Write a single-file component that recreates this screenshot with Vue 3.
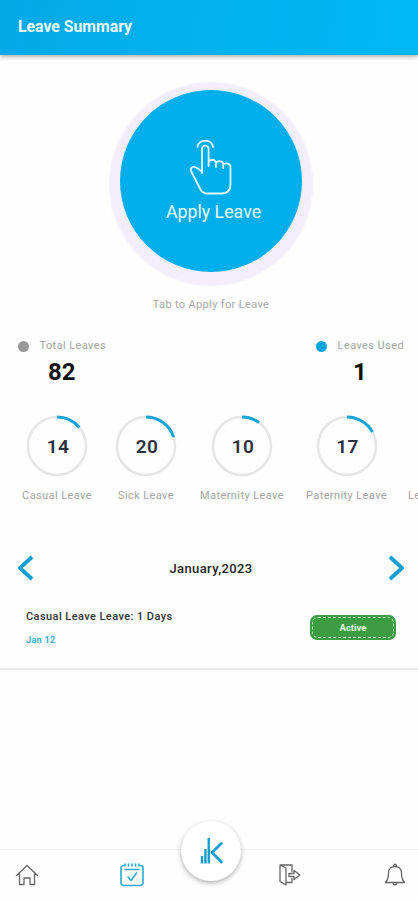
<template>
  <div class="screen">
    <header class="app-header">
      <h1 class="app-title">Leave Summary</h1>
    </header>

    <main class="content">
      <section class="apply">
        <button class="apply-button">
          <svg class="hand-icon" viewBox="0 0 42 56">
            <path d="M12 33V9a3.300 3.300 0 0 1 6.600 0V26M18.600 22.500c1-3.500 7-3.500 7.300.500V27M25.900 23.500c1-3.500 7-3 7.300.800V28M33.200 25c2-2.800 7.300-1.500 7.300 2V44c0 6-3 9.500-8.500 9.500H17c-3 0-4.800-1.200-6.500-4L1.500 32C-.500 28 2.500 26 6 27.500c3 1.200 4.500 3 6 4.500" />
            <path d="M7.500 7C8.500-1.300 22-1.300 23 7" />
          </svg>
          <span class="apply-label">Apply Leave</span>
        </button>
        <p class="apply-hint">Tab to Apply for Leave</p>
      </section>

      <section class="totals">
        <div class="total">
          <p class="total-label"><span class="dot"></span>Total Leaves</p>
          <p class="total-value">82</p>
        </div>
        <div class="total">
          <p class="total-label"><span class="dot dot-used"></span>Leaves Used</p>
          <p class="total-value">1</p>
        </div>
      </section>

      <section class="leave-types">
        <div v-for="leave in leaveTypes" :key="leave.name" class="leave-type" :style="{ width: leave.width + 'px' }">
          <div class="ring">
            <svg class="ring-svg" viewBox="0 0 62 62">
              <circle class="ring-track" cx="31" cy="31" r="29" />
              <circle class="ring-value" cx="31" cy="31" r="29" pathLength="100" :stroke-dasharray="leave.days + ' 100'" />
            </svg>
            <span class="ring-number">{{ leave.days }}</span>
          </div>
          <span class="leave-name">{{ leave.name }}</span>
        </div>
        <span class="leave-name leave-next">Leave</span>
      </section>

      <section class="month">
        <svg class="chevron" viewBox="0 0 16 26"><path d="M15 2 3 13l12 11" /></svg>
        <h2 class="month-title">January,2023</h2>
        <svg class="chevron" viewBox="0 0 16 26"><path d="m1 2 12 11L1 24" /></svg>
      </section>

      <section class="entry">
        <div>
          <p class="entry-title">Casual Leave Leave: 1 Days</p>
          <p class="entry-date">Jan 12</p>
        </div>
        <span class="status"><span class="status-text">Active</span></span>
      </section>
    </main>

    <nav class="tab-bar">
      <svg class="tab-icon" viewBox="0 0 24 24">
        <path d="M1.500 12.500 12 2.500l10.500 10M4.500 10.500V21.500H9v-6.500h6v6.500h4.500V10.500" />
      </svg>
      <svg class="tab-icon tab-active" viewBox="0 0 24 24">
        <path d="M3.500 2.500a2.500 2.500 0 0 0-2.500 2.500v14.500a3 3 0 0 0 3 3h16a3 3 0 0 0 3-3V5a2.500 2.500 0 0 0-2.500-2.500M5 6.500h14M5 1v2M8.500 1v2M12 1v2M15.500 1v2M19 1v2M8 14l3 3.500 5.500-7.500" />
      </svg>
      <span class="tab-gap"></span>
      <svg class="tab-icon" viewBox="0 0 24 24">
        <path d="M2 2 8 5v17l-6-3.500ZM2 2h12v6.500M8 19.500h6v-4M11 10.500h5V7.500l6 4.500-6 4.500v-3h-5Z" />
      </svg>
      <svg class="tab-icon" viewBox="0 0 24 24">
        <path d="M2.500 19.500h19c-2.500-2.500-3-4.500-3-9.500 0-4-2.500-6.500-6.500-6.500S5.500 6 5.500 10c0 5-.5 7-3 9.500ZM10.500 3.500c0-3 3-3 3 0M10 20c.5 2.500 3.500 2.500 4 0" />
      </svg>
      <button class="fab">
        <svg class="logo" viewBox="0 0 24 28">
          <path class="logo-bars" d="M3 19v7.500M6.400 12v14.500M9.800 1v25.500" />
          <path class="logo-k" d="m22.300 6.500-9.300 9 9.300 9.500" />
        </svg>
      </button>
    </nav>
  </div>
</template>

<script setup>
const leaveTypes = [
  { name: 'Casual Leave', days: 14, width: 70 },
  { name: 'Sick Leave', days: 20, width: 63 },
  { name: 'Maternity Leave', days: 10, width: 84 },
  { name: 'Paternity Leave', days: 17, width: 80 }
]
</script>

<style>
body {
  background: #fefefe;
}
</style>

<style scoped>
.screen {
  position: relative;
  display: flex;
  flex-direction: column;
  width: 418px;
  height: 900px;
  overflow: hidden;
  background: #fefefe;
  font-family: Roboto, 'Liberation Sans', sans-serif;
}

h1, h2, p {
  margin: 0;
}

button {
  border: 0;
  padding: 0;
  font-family: inherit;
}

svg {
  display: block;
  fill: none;
  stroke-linecap: round;
  stroke-linejoin: round;
}

.app-header {
  display: flex;
  align-items: center;
  flex: none;
  height: 55px;
  padding: 0 18px;
  box-sizing: border-box;
  background: linear-gradient(100deg, #04a9e8, #00b9f4);
  box-shadow: 0 2px 4px rgba(0, 0, 0, 0.3);
}

.app-title {
  color: #effbff;
  font-size: 15.800px;
  line-height: 20px;
  font-weight: 700;
  padding-bottom: 1px;
}

.content {
  flex: 1;
}

.apply {
  display: flex;
  flex-direction: column;
  align-items: center;
  padding: 35px 0 0 4px;
}

.apply-button {
  display: flex;
  flex-direction: column;
  align-items: center;
  width: 182px;
  height: 182px;
  border-radius: 50%;
  background: #02aeeb;
  box-shadow: 0 3px 2px 11px #f2effb;
}

.hand-icon {
  width: 42px;
  height: 56px;
  margin-top: 50px;
  stroke: #e2f8ff;
  stroke-width: 1.8;
}

.apply-label {
  margin-top: 4px;
  padding-left: 5px;
  color: #e6f9ff;
  font-size: 17.800px;
  line-height: 24px;
}

.apply-hint {
  margin-top: 25px;
  color: #aaa;
  font-size: 11px;
  line-height: 16px;
  letter-spacing: 0.35px;
}

.totals {
  display: flex;
  justify-content: space-between;
  padding: 25px 14px 0 17.500px;
}

.total-label {
  display: flex;
  align-items: center;
  color: #a5a5a5;
  font-size: 11px;
  line-height: 16px;
  letter-spacing: 0.4px;
}

.dot {
  width: 11px;
  height: 11px;
  margin-right: 11px;
  border-radius: 50%;
  background: #999;
}

.dot-used {
  background: #09a5df;
}

.total-value {
  margin-top: 4px;
  color: #111;
  font-size: 24px;
  line-height: 28px;
  font-weight: 700;
  text-align: center;
}

.leave-types {
  display: flex;
  gap: 22.500px;
  padding: 29px 0 0 22px;
  overflow: hidden;
}

.leave-type {
  display: flex;
  flex-direction: column;
  align-items: center;
  flex: none;
}

.ring {
  display: grid;
  place-items: center;
  width: 62px;
  height: 62px;
}

.ring-svg {
  grid-area: 1 / 1;
  width: 62px;
  height: 62px;
  transform: rotate(-90deg);
}

.ring-track {
  stroke: #e6e6e8;
  stroke-width: 2.500;
}

.ring-value {
  stroke: #12a3d8;
  stroke-width: 3;
  stroke-linecap: butt;
}

.ring-number {
  grid-area: 1 / 1;
  padding-left: 2px;
  color: #2b3040;
  font-size: 19px;
  font-weight: 600;
  letter-spacing: 0.3px;
}

.leave-name {
  margin-top: 11px;
  color: #a5a5a5;
  font-size: 11px;
  line-height: 16px;
  letter-spacing: 0.4px;
  white-space: nowrap;
}

/* next item of the carousel, peeking in from the right */
.leave-next {
  align-self: flex-end;
  margin-left: -1px;
}

.month {
  display: flex;
  align-items: center;
  justify-content: space-between;
  padding: 51px 13px 0 17px;
}

.chevron {
  width: 16px;
  height: 26px;
  stroke: #129fd5;
  stroke-width: 3.800;
  stroke-linecap: butt;
}

.month-title {
  color: #222;
  font-size: 13px;
  font-weight: 500;
  letter-spacing: 0.4px;
}

.entry {
  display: flex;
  justify-content: space-between;
  height: 89px;
  padding: 27px 22px 0 26px;
  box-sizing: border-box;
  border-bottom: 2px solid #e9e9e9;
}

.entry-title {
  color: #333;
  font-size: 11px;
  line-height: 18px;
  font-weight: 500;
  letter-spacing: 0.42px;
}

.entry-date {
  margin-top: 7px;
  color: #25a5cd;
  font-size: 9.300px;
  line-height: 14px;
  font-weight: 500;
  letter-spacing: 0.2px;
}

.status {
  width: 86px;
  height: 25px;
  margin-top: 7px;
  padding: 2px;
  box-sizing: border-box;
  border-radius: 7px;
  background: #3b9c41;
}

.status-text {
  display: flex;
  align-items: center;
  justify-content: center;
  height: 21px;
  box-sizing: border-box;
  border: 1px dashed #b9dfb9;
  border-radius: 6px;
  color: #f0fff0;
  font-size: 9.500px;
  font-weight: 700;
}

.tab-bar {
  position: relative;
  display: flex;
  align-items: center;
  flex: none;
  height: 51px;
  padding: 0 10px 0 15px;
  box-sizing: border-box;
  border-top: 1px solid #f5f5f5;
}

.tab-icon {
  flex: none;
  width: 24px;
  height: 24px;
  margin-right: 81px;
  stroke: #666;
  stroke-width: 1.3;
}

.tab-active {
  margin-right: 0;
  stroke: #2ba9d2;
  stroke-width: 1.6;
}

.tab-gap {
  width: 134px;
  flex: none;
}

.fab {
  position: absolute;
  top: -29px;
  left: 181px;
  display: grid;
  place-items: center;
  width: 60px;
  height: 60px;
  border-radius: 50%;
  background: #fff;
  box-shadow: 0 2px 5px rgba(0, 0, 0, 0.3);
}

.logo {
  width: 24px;
  height: 28px;
}

.logo-bars {
  stroke: #1e9fcb;
  stroke-width: 2.500;
  stroke-linecap: butt;
}

.logo-k {
  stroke: #119fd6;
  stroke-width: 2.800;
}
</style>
